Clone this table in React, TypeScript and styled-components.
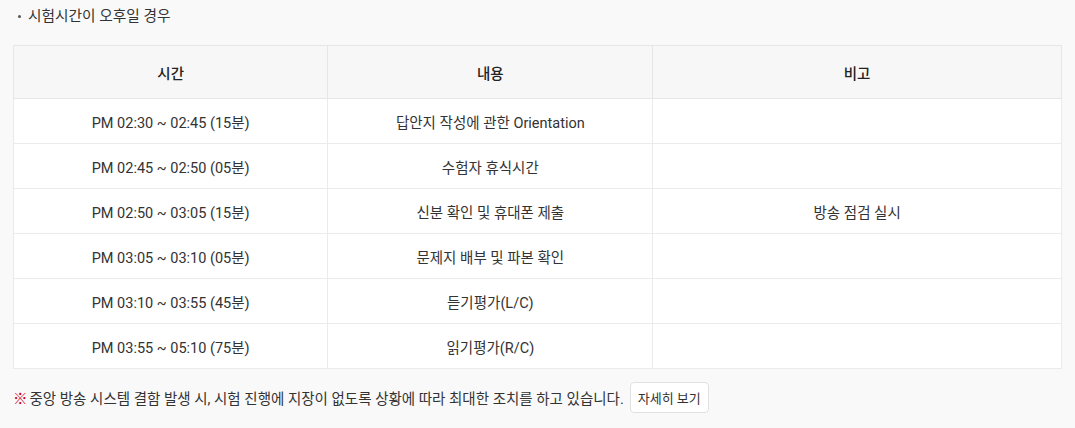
import * as React from 'react';
import styled, { createGlobalStyle } from 'styled-components';

interface IScheduleRow {
  time: string;
  content: string;
  note: string;
}

const rows: IScheduleRow[] = [
  { time: 'PM 02:30 ~ 02:45 (15분)', content: '답안지 작성에 관한 Orientation', note: '' },
  { time: 'PM 02:45 ~ 02:50 (05분)', content: '수험자 휴식시간', note: '' },
  { time: 'PM 02:50 ~ 03:05 (15분)', content: '신분 확인 및 휴대폰 제출', note: '방송 점검 실시' },
  { time: 'PM 03:05 ~ 03:10 (05분)', content: '문제지 배부 및 파본 확인', note: '' },
  { time: 'PM 03:10 ~ 03:55 (45분)', content: '듣기평가(L/C)', note: '' },
  { time: 'PM 03:55 ~ 05:10 (75분)', content: '읽기평가(R/C)', note: '' },
];

export default function App() {
  return (
    <>
      <GlobalStyle />
      <Page>
        <Title>시험시간이 오후일 경우</Title>
        <Table>
          <colgroup>
            <col style={{ width: '30%' }} />
            <col style={{ width: '31%' }} />
            <col />
          </colgroup>
          <thead>
            <tr>
              <HeadCell>시간</HeadCell>
              <HeadCell>내용</HeadCell>
              <HeadCell>비고</HeadCell>
            </tr>
          </thead>
          <tbody>
            {rows.map((row) => (
              <tr key={row.time}>
                <BodyCell>{row.time}</BodyCell>
                <BodyCell>{row.content}</BodyCell>
                <BodyCell>{row.note}</BodyCell>
              </tr>
            ))}
          </tbody>
        </Table>
        <Notice>
          <Mark>※</Mark>
          <span>중앙 방송 시스템 결함 발생 시, 시험 진행에 지장이 없도록 상황에 따라 최대한 조치를 하고 있습니다.</span>
          <MoreButton type="button">자세히 보기</MoreButton>
        </Notice>
      </Page>
    </>
  );
}

const GlobalStyle = createGlobalStyle`
  html, body {
    margin: 0;
    padding: 0;
    background: #f9f9f9;
  }
  body {
    font-family: Roboto, "Noto Sans CJK KR", sans-serif;
    color: #333333;
  }
`;

const Page = styled.div`
  width: 1075px;
  height: 428px;
  box-sizing: border-box;
  padding: 5px 13px 0 13px;
`;

const Title = styled.div`
  display: flex;
  align-items: center;
  font-size: 14.7px;
  line-height: 22px;
  color: #333333;
  padding-left: 5px;

  &::before {
    content: '';
    width: 3px;
    height: 3px;
    border-radius: 50%;
    background: #555555;
    margin-right: 7px;
  }
`;

const Table = styled.table`
  width: 100%;
  margin-top: 18px;
  border-collapse: collapse;
  table-layout: fixed;
  background: #ffffff;
  font-size: 14.5px;
`;

const HeadCell = styled.th`
  height: 52px;
  padding: 0;
  background: #f7f7f7;
  border: 1px solid #e6e6e6;
  font-weight: 500;
  color: #222222;
  text-align: center;
`;

const BodyCell = styled.td`
  height: 44px;
  padding: 0;
  border: 1px solid #ebebeb;
  text-align: center;
  color: #333333;
`;

const Notice = styled.div`
  display: flex;
  align-items: center;
  margin-top: 13px;
  font-size: 14.5px;
  color: #333333;
`;

const Mark = styled.span`
  color: #d0021b;
  margin-right: 2px;
`;

const MoreButton = styled.button`
  margin-left: 6px;
  height: 31px;
  padding: 0 7px;
  background: #ffffff;
  border: 1px solid #e1e1e1;
  border-radius: 4px;
  font-family: Roboto, "Noto Sans CJK KR", sans-serif;
  font-size: 13px;
  color: #333333;
  cursor: pointer;
`;
